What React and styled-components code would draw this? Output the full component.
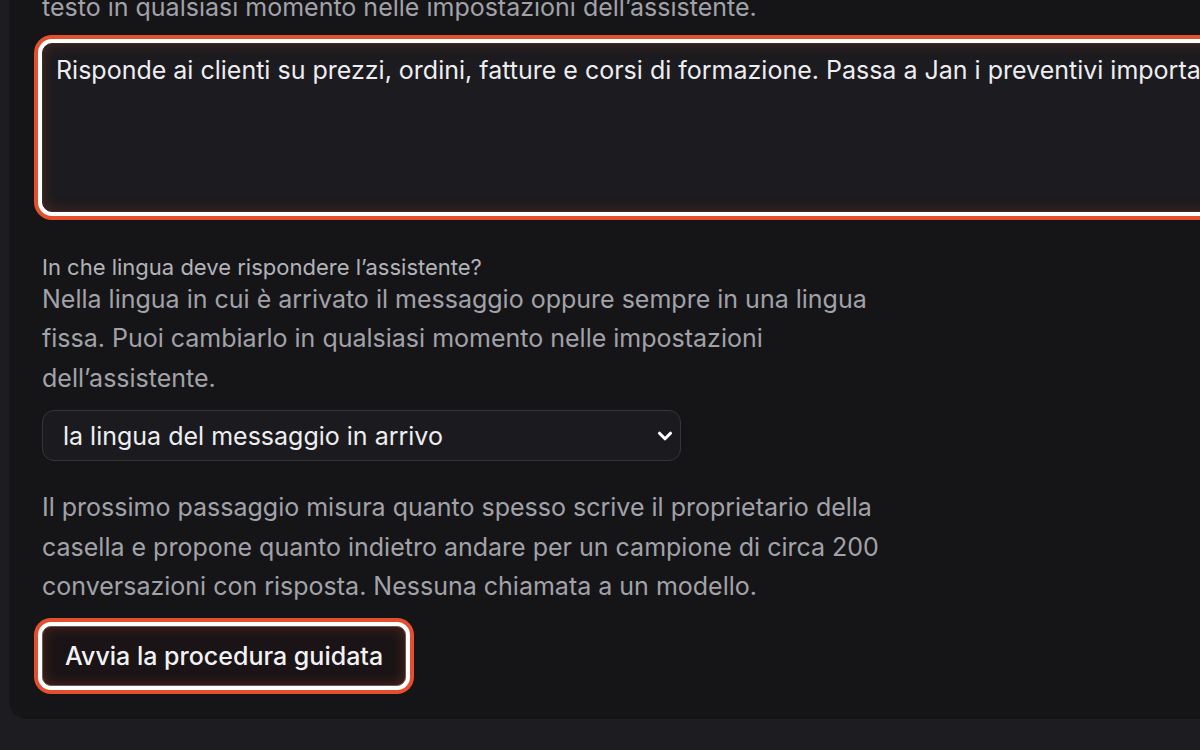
import React from 'react';
import styled, { createGlobalStyle } from 'styled-components';
import { ChevronDown } from 'lucide-react';

const GlobalStyle = createGlobalStyle`
  html, body {
    margin: 0;
    padding: 0;
    background: #1d1d21;
    overflow: hidden;
    font-family: Inter, "Noto Sans", "Liberation Sans", sans-serif;
  }
`;

const ORANGE = '#e4502e';

const focusRing = (glow) => `
  inset 0 0 14px rgba(228, 80, 46, ${glow}),
  0 0 0 4px #ffffff,
  0 0 0 8px ${ORANGE}
`;

const Page = styled.div`
  width: 1200px;
  height: 750px;
  overflow: hidden;
  background: #1d1d21;
`;

const Panel = styled.section`
  margin: -32px 0 0 9px;
  width: 1400px;
  padding: 20px 33px 33px;
  background: #151518;
  border-radius: 0 0 0 18px;
  box-sizing: border-box;
`;

const Text = styled.p`
  margin: 0;
  max-width: 856px;
  font-size: 25px;
  line-height: 39.5px;
  color: #a2a2a9;
`;

const Hint = styled(Text)`
  margin-bottom: 15px;
`;

const Editor = styled.div`
  box-sizing: border-box;
  width: 1300px;
  height: 169px;
  padding: 8px 13px;
  border: 1px solid #3a2a2a;
  border-radius: 10px;
  background: #1c1b1f;
  color: #eeeef1;
  font-size: 25px;
  line-height: 37px;
  white-space: nowrap;
  overflow: hidden;
  box-shadow: ${focusRing(0.22)};
`;

const Field = styled.div`
  margin-top: 42px;
`;

const Label = styled.div`
  font-size: 22px;
  line-height: 26px;
  color: #b3b3b9;
`;

const Select = styled.div`
  box-sizing: border-box;
  display: flex;
  align-items: center;
  justify-content: space-between;
  width: 639px;
  height: 51px;
  margin-top: 12px;
  padding: 0 4px 0 20px;
  border: 1px solid #35353a;
  border-radius: 12px;
  background: #1b1b1f;
  color: #eeeef1;
  font-size: 25px;
`;

const Note = styled(Text)`
  margin-top: 27px;
`;

const Button = styled.button`
  box-sizing: border-box;
  display: block;
  margin-top: 19px;
  height: 60px;
  padding: 0 22px;
  border: 1px solid #6e5a5a;
  border-radius: 9px;
  background: #1a1416;
  color: #f2f2f4;
  font-family: inherit;
  font-size: 25px;
  font-weight: 500;
  cursor: pointer;
  box-shadow: ${focusRing(0.28)};
`;

export default function App() {
  return (
    <Page>
      <GlobalStyle />
      <Panel>
        <Hint>testo in qualsiasi momento nelle impostazioni dell’assistente.</Hint>
        <Editor>
          Risponde ai clienti su prezzi, ordini, fatture e corsi di formazione. Passa a Jan i preventivi importanti e le richieste di sconto.
        </Editor>

        <Field>
          <Label>In che lingua deve rispondere l’assistente?</Label>
          <Text>
            Nella lingua in cui è arrivato il messaggio oppure sempre in una lingua fissa. Puoi cambiarlo in qualsiasi momento nelle impostazioni dell’assistente.
          </Text>
          <Select>
            <span>la lingua del messaggio in arrivo</span>
            <ChevronDown size={22} strokeWidth={3.4} color="#ffffff" />
          </Select>
        </Field>

        <Note>
          Il prossimo passaggio misura quanto spesso scrive il proprietario della casella e propone quanto indietro andare per un campione di circa 200 conversazioni con risposta. Nessuna chiamata a un modello.
        </Note>
        <Button>Avvia la procedura guidata</Button>
      </Panel>
    </Page>
  );
}
